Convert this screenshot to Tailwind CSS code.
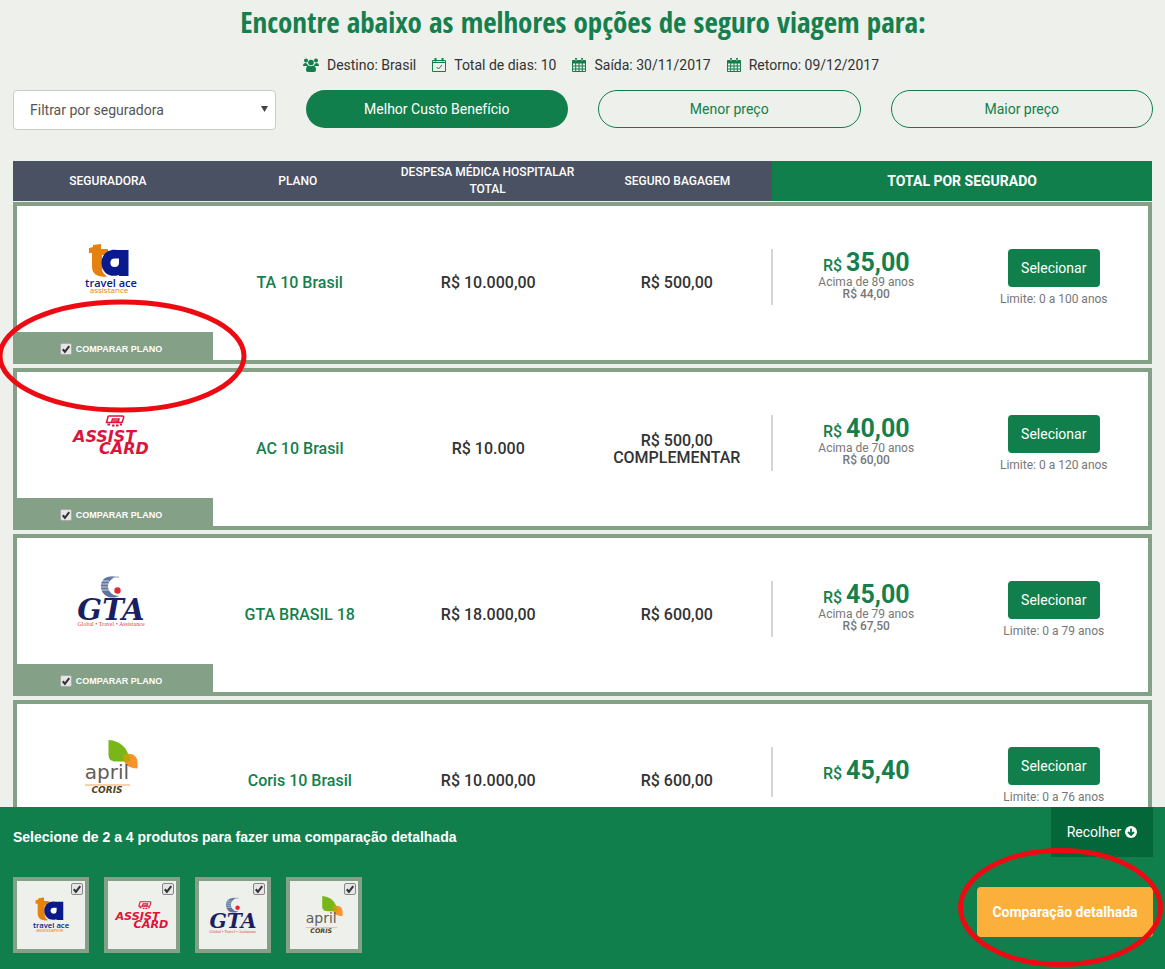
<!DOCTYPE html>
<html lang="pt-BR">
<head>
  <meta charset="UTF-8" />
  <title>Seguro viagem - Cotação</title>
  <meta name="viewport" content="width=device-width, initial-scale=1" />
  <script src="https://cdn.jsdelivr.net/npm/@tailwindcss/browser@4"></script>
</head>
<body class="relative min-h-screen overflow-x-hidden bg-[#edf0eb] font-[Roboto,sans-serif] text-sm text-[#333]">

  <!-- Shared icons and insurer logos -->
  <svg class="hidden">
    <symbol id="check" viewBox="0 0 13 13">
      <path d="M3 6.800 5.300 9.500 10 3.300" fill="none" stroke="#333" stroke-width="2.200" />
    </symbol>
    <symbol id="calendar" viewBox="0 0 14 14">
      <path d="M.5 2.500h13v11H.5zM.5 5h13M.5 8h13M.5 11h13M3.700 5v8.500M7 5v8.500M10.300 5v8.500" fill="none" stroke="#107f4c" />
      <path d="M.5 2.500h13V5H.5zM3 0h2v3.500H3zM9 0h2v3.500H9z" fill="#107f4c" />
      <path d="M4 .8v2.200M10 .8v2.200" stroke="#edf0eb" stroke-width=".7" />
    </symbol>
    <symbol id="travel-ace" viewBox="0 0 80 60">
      <path d="M18 9l4-1V6l8-1v5h7v6h-6v14c0 3 2 5 5 7.500-9 1-15-2-15-10V14h-3z" fill="#e5820f" />
      <path d="M57.500 11v26h-9l-1-1c-8 3-17-2-17-12 0-9 7-14 15-13z" fill="#0a1a8c" />
      <path d="M48 19.500v4.500a4.300 4.300 0 1 1-4.300-4.500z" fill="#fff" />
      <text x="40" y="48" text-anchor="middle" font-family="Open Sans" font-weight="600" font-size="11" fill="#0a1a8c">travel ace</text>
      <text x="38" y="54" text-anchor="middle" font-family="Open Sans" font-size="8" fill="#e5820f">assistance</text>
    </symbol>
    <symbol id="assist-card" viewBox="0 0 80 60">
      <path d="M38 11h13c2 0 2 1 1.500 2L51 17.500H35.500L37 12c0-.6.5-1 1-1z" fill="none" stroke="#dc143c" stroke-width="1.500" />
      <path d="M40.500 17.500l1-3.500h6.500l-1 3.500M42 16h5" fill="none" stroke="#dc143c" stroke-width="1.500" />
      <path d="M36.500 19.500h2.500M41 20.500h2.500M45 20.500h2.500M49 19.500h2" stroke="#dc143c" stroke-width="2" />
      <text x="2" y="37" font-family="DejaVu Sans" font-style="italic" font-weight="bold" font-size="16" fill="#dc143c">ASSIST</text>
      <text x="28" y="49" font-family="DejaVu Sans" font-style="italic" font-weight="bold" font-size="16" fill="#dc143c">CARD</text>
    </symbol>
    <symbol id="gta" viewBox="0 0 80 60">
      <path d="M44 6C34 4 29 10 30 17c1 8 10 12 18 8-6 0-11-4-11-10 0-4 3-7 7-9z" fill="#5f739f" />
      <path d="M30 10h8M29 13h8M29 16h8M30 19h9" stroke="#fff" stroke-width=".7" />
      <path d="M39 6h9" stroke="#8d9bbb" />
      <circle cx="46.500" cy="19.500" r="3.200" fill="#e02a35" />
      <text x="40" y="49" text-anchor="middle" font-family="DejaVu Serif" font-style="italic" font-weight="bold" font-size="29" fill="#1a1f63">GTA</text>
      <text x="40" y="55" text-anchor="middle" font-family="Liberation Serif" font-size="6" fill="#e0434c">Global • Travel • Assistance</text>
    </symbol>
    <symbol id="april-coris" viewBox="0 0 80 60">
      <path d="M37.500 3C49 4 57 10 59 24.500H45c-5 0-7.500-2-7.500-7z" fill="#78b61a" />
      <path d="M55 17c7-1 11 2 11.500 8v6.500C58 31 53 28 52.500 21c0-2 1-4 2.500-4z" fill="#f7922c" />
      <path d="M55 17h2.500c1 2 1.500 5 1.500 7.500h-6C52 21 53 18 55 17z" fill="#c2a400" />
      <text x="36" y="42" text-anchor="middle" font-family="DejaVu Sans" font-size="20" fill="#625d58">april</text>
      <path d="M14 48h45" stroke="#f0a55a" />
      <text x="36" y="56" text-anchor="middle" font-family="DejaVu Sans" font-style="italic" font-weight="bold" font-size="9" fill="#4a4425">CORIS</text>
    </symbol>
  </svg>

  <!-- Search summary and filters -->
  <header class="pr-3 pl-[13px]">
    <h1 class="flex h-11 items-center justify-center font-['Open_Sans_Condensed','Liberation_Sans_Narrow',sans-serif] text-[29px] font-bold whitespace-nowrap text-[#157f4d]">Encontre abaixo as melhores opções de seguro viagem para:</h1>
    <ul class="flex h-[46px] items-center justify-center gap-4 pb-1 pl-4 text-[#333]">
      <li class="flex items-center gap-2">
        <svg class="h-3.5 w-4" viewBox="0 0 16 14" fill="#107f4c">
          <circle cx="3" cy="2.500" r="2" /><circle cx="13" cy="2.500" r="2" /><circle cx="8" cy="4.500" r="2.800" />
          <path d="M0 8c0-2 1-3 2.500-3l2 1c0 1 .5 1.600 1 2H1C.4 8 0 8 0 8zM16 8c0-2-1-3-2.500-3l-2 1c0 1-.5 1.600-1 2H15c.6 0 1 0 1 0zM3 12c0-3 1-4.500 3-4.500 1.200 1 2.800 1 4 0 2 0 3 1.500 3 4.500 0 1.300-.8 2-2 2H5c-1.200 0-2-.7-2-2z" />
        </svg>
        Destino: Brasil
      </li>
      <li class="flex items-center gap-2">
        <svg class="size-3.5" viewBox="0 0 14 14" fill="none" stroke="#107f4c">
          <path d="M.5 2.500h13v11H.5zM.5 4.500h13M4.500 9l2 2 3.500-4" /><path d="M3.500 0v3.500M10.500 0v3.500" stroke-width="2" />
        </svg>
        Total de dias: 10
      </li>
      <li class="flex items-center gap-2"><svg class="size-3.5"><use href="#calendar" /></svg>Saída: 30/11/2017</li>
      <li class="flex items-center gap-2"><svg class="size-3.5"><use href="#calendar" /></svg>Retorno: 09/12/2017</li>
    </ul>
    <div class="grid grid-cols-4 gap-[30px]">
      <div class="relative">
        <select aria-label="Filtrar por seguradora" class="h-10 w-full appearance-none rounded border border-[#c5cfc2] bg-white px-4 text-[#555]">
          <option>Filtrar por seguradora</option>
        </select>
        <svg class="pointer-events-none absolute top-4 right-2 h-1.5 w-[7px]" viewBox="0 0 7 6"><path d="M0 0h7L3.500 6z" fill="#444" /></svg>
      </div>
      <button class="h-[38px] rounded-full bg-[#107f4c] text-white">Melhor Custo Benefício</button>
      <button class="h-[38px] rounded-full border border-[#107f4c] text-[#107f4c]">Menor preço</button>
      <button class="h-[38px] rounded-full border border-[#107f4c] text-[#107f4c]">Maior preço</button>
    </div>
  </header>

  <!-- Plans -->
  <main class="mt-[31px] pr-[13px] pb-24 pl-[13px]">
    <table class="block w-full text-center">
      <thead class="mb-px block">
        <tr class="grid h-10 grid-cols-6 bg-[#4a5162] text-xs text-white">
          <th class="self-center font-medium">SEGURADORA</th>
          <th class="self-center font-medium">PLANO</th>
          <th class="self-center px-1 leading-[17px] font-medium">DESPESA MÉDICA HOSPITALAR TOTAL</th>
          <th class="self-center font-medium">SEGURO BAGAGEM</th>
          <th class="col-span-2 flex items-center justify-center bg-[#107f4c] text-sm font-bold">TOTAL POR SEGURADO</th>
        </tr>
      </thead>
      <tbody class="flex flex-col gap-1">
        <tr class="grid h-[162px] grid-cols-6 border-4 border-[#84a087] bg-white">
          <td class="relative flex justify-center pt-[33px]">
            <svg class="h-[60px] w-20" role="img" aria-label="Travel Ace Assistance"><use href="#travel-ace" /></svg>
            <label class="absolute -bottom-1 -left-1 flex h-8 w-[200px] items-center justify-center gap-1 bg-[#84a087] pt-0.5 pr-1 font-['Liberation_Sans',sans-serif] text-[9px] font-bold text-white">
              <span class="grid"><input type="checkbox" checked class="col-start-1 row-start-1 size-3 appearance-none rounded-xs border border-[#aaa] bg-[#e6e6e6]" /><svg class="pointer-events-none col-start-1 row-start-1 size-3"><use href="#check" /></svg></span>
              COMPARAR PLANO
            </label>
          </td>
          <td class="self-center text-base font-medium text-[#157f4d]">TA 10 Brasil</td>
          <td class="self-center text-base font-medium">R$ 10.000,00</td>
          <td class="self-center text-base font-medium">R$ 500,00</td>
          <td class="mt-[43px] h-14 border-l-2 border-[#d5d5d5] text-xs leading-3 text-[#777]">
            <p class="-mb-1 text-base leading-7 font-medium text-[#157f4d]">R$ <b class="text-[25px]">35,00</b></p>
            <p>Acima de 89 anos</p>
            <p class="font-medium">R$ 44,00</p>
          </td>
          <td class="pt-[43px] text-xs text-[#777]">
            <button class="h-[38px] w-[92px] rounded bg-[#107f4c] text-sm text-white">Selecionar</button>
            <p class="mt-1">Limite: 0 a 100 anos</p>
          </td>
        </tr>
        <tr class="grid h-[162px] grid-cols-6 border-4 border-[#84a087] bg-white">
          <td class="relative flex justify-center pt-[33px]">
            <svg class="h-[60px] w-20" role="img" aria-label="Assist Card"><use href="#assist-card" /></svg>
            <label class="absolute -bottom-1 -left-1 flex h-8 w-[200px] items-center justify-center gap-1 bg-[#84a087] pt-0.5 pr-1 font-['Liberation_Sans',sans-serif] text-[9px] font-bold text-white">
              <span class="grid"><input type="checkbox" checked class="col-start-1 row-start-1 size-3 appearance-none rounded-xs border border-[#aaa] bg-[#e6e6e6]" /><svg class="pointer-events-none col-start-1 row-start-1 size-3"><use href="#check" /></svg></span>
              COMPARAR PLANO
            </label>
          </td>
          <td class="self-center text-base font-medium text-[#157f4d]">AC 10 Brasil</td>
          <td class="self-center text-base font-medium">R$ 10.000</td>
          <td class="self-center text-base leading-[17px] font-medium">R$ 500,00<br />COMPLEMENTAR</td>
          <td class="mt-[43px] h-14 border-l-2 border-[#d5d5d5] text-xs leading-3 text-[#777]">
            <p class="-mb-1 text-base leading-7 font-medium text-[#157f4d]">R$ <b class="text-[25px]">40,00</b></p>
            <p>Acima de 70 anos</p>
            <p class="font-medium">R$ 60,00</p>
          </td>
          <td class="pt-[43px] text-xs text-[#777]">
            <button class="h-[38px] w-[92px] rounded bg-[#107f4c] text-sm text-white">Selecionar</button>
            <p class="mt-1">Limite: 0 a 120 anos</p>
          </td>
        </tr>
        <tr class="grid h-[162px] grid-cols-6 border-4 border-[#84a087] bg-white">
          <td class="relative flex justify-center pt-[33px]">
            <svg class="h-[60px] w-20" role="img" aria-label="GTA"><use href="#gta" /></svg>
            <label class="absolute -bottom-1 -left-1 flex h-8 w-[200px] items-center justify-center gap-1 bg-[#84a087] pt-0.5 pr-1 font-['Liberation_Sans',sans-serif] text-[9px] font-bold text-white">
              <span class="grid"><input type="checkbox" checked class="col-start-1 row-start-1 size-3 appearance-none rounded-xs border border-[#aaa] bg-[#e6e6e6]" /><svg class="pointer-events-none col-start-1 row-start-1 size-3"><use href="#check" /></svg></span>
              COMPARAR PLANO
            </label>
          </td>
          <td class="self-center text-base font-medium text-[#157f4d]">GTA BRASIL 18</td>
          <td class="self-center text-base font-medium">R$ 18.000,00</td>
          <td class="self-center text-base font-medium">R$ 600,00</td>
          <td class="mt-[43px] h-14 border-l-2 border-[#d5d5d5] text-xs leading-3 text-[#777]">
            <p class="-mb-1 text-base leading-7 font-medium text-[#157f4d]">R$ <b class="text-[25px]">45,00</b></p>
            <p>Acima de 79 anos</p>
            <p class="font-medium">R$ 67,50</p>
          </td>
          <td class="pt-[43px] text-xs text-[#777]">
            <button class="h-[38px] w-[92px] rounded bg-[#107f4c] text-sm text-white">Selecionar</button>
            <p class="mt-1">Limite: 0 a 79 anos</p>
          </td>
        </tr>
        <tr class="grid h-[162px] grid-cols-6 border-4 border-[#84a087] bg-white">
          <td class="flex justify-center pt-[33px]">
            <svg class="h-[60px] w-20" role="img" aria-label="April Coris"><use href="#april-coris" /></svg>
          </td>
          <td class="self-center text-base font-medium text-[#157f4d]">Coris 10 Brasil</td>
          <td class="self-center text-base font-medium">R$ 10.000,00</td>
          <td class="self-center text-base font-medium">R$ 600,00</td>
          <td class="mt-[43px] flex h-[50px] items-center justify-center border-l-2 border-[#d5d5d5]">
            <p class="text-base leading-7 font-medium text-[#157f4d]">R$ <b class="text-[25px]">45,40</b></p>
          </td>
          <td class="pt-[43px] text-xs text-[#777]">
            <button class="h-[38px] w-[92px] rounded bg-[#107f4c] text-sm text-white">Selecionar</button>
            <p class="mt-1">Limite: 0 a 76 anos</p>
          </td>
        </tr>
      </tbody>
    </table>
  </main>

  <!-- Comparison drawer -->
  <footer class="fixed inset-x-0 bottom-0 flex h-[162px] justify-between bg-[#107f4c] pr-3 pl-[13px] text-white">
    <div class="flex flex-col justify-between pt-5 pb-4">
      <p class="font-['Liberation_Sans',sans-serif] font-bold">Selecione de 2 a 4 produtos para fazer uma comparação detalhada</p>
      <div class="flex gap-[15px]">
        <label class="relative grid size-19 place-items-center border-4 border-[#84a087] bg-[#edf0eb]">
          <svg class="h-[42px] w-14" role="img" aria-label="Travel Ace Assistance"><use href="#travel-ace" /></svg>
          <span class="absolute top-0.5 right-0.5 grid"><input type="checkbox" checked class="col-start-1 row-start-1 size-3 appearance-none rounded-xs border border-[#888] bg-[#e6e6e6]" /><svg class="pointer-events-none col-start-1 row-start-1 size-3"><use href="#check" /></svg></span>
        </label>
        <label class="relative grid size-19 place-items-center border-4 border-[#84a087] bg-[#edf0eb]">
          <svg class="h-[42px] w-14" role="img" aria-label="Assist Card"><use href="#assist-card" /></svg>
          <span class="absolute top-0.5 right-0.5 grid"><input type="checkbox" checked class="col-start-1 row-start-1 size-3 appearance-none rounded-xs border border-[#888] bg-[#e6e6e6]" /><svg class="pointer-events-none col-start-1 row-start-1 size-3"><use href="#check" /></svg></span>
        </label>
        <label class="relative grid size-19 place-items-center border-4 border-[#84a087] bg-[#edf0eb]">
          <svg class="h-[42px] w-14" role="img" aria-label="GTA"><use href="#gta" /></svg>
          <span class="absolute top-0.5 right-0.5 grid"><input type="checkbox" checked class="col-start-1 row-start-1 size-3 appearance-none rounded-xs border border-[#888] bg-[#e6e6e6]" /><svg class="pointer-events-none col-start-1 row-start-1 size-3"><use href="#check" /></svg></span>
        </label>
        <label class="relative grid size-19 place-items-center border-4 border-[#84a087] bg-[#edf0eb]">
          <svg class="h-[42px] w-14" role="img" aria-label="April Coris"><use href="#april-coris" /></svg>
          <span class="absolute top-0.5 right-0.5 grid"><input type="checkbox" checked class="col-start-1 row-start-1 size-3 appearance-none rounded-xs border border-[#888] bg-[#e6e6e6]" /><svg class="pointer-events-none col-start-1 row-start-1 size-3"><use href="#check" /></svg></span>
        </label>
      </div>
    </div>
    <div class="flex flex-col items-end justify-between pb-8">
      <button class="flex h-[50px] w-[102px] items-center justify-center gap-1 bg-[#04673a]">
        Recolher
        <svg class="size-3" viewBox="0 0 12 12"><circle cx="6" cy="6" r="6" fill="#fff" /><path d="M6 2.500v6M3 6l3 3 3-3" fill="none" stroke="#04673a" stroke-width="1.800" /></svg>
      </button>
      <button class="h-[50px] w-44 rounded bg-[#fbb03b] font-bold">Comparação detalhada</button>
    </div>
    <svg class="pointer-events-none absolute right-0 bottom-0 h-[122px] w-[209px]" viewBox="0 0 209 122"><ellipse cx="104.500" cy="60.500" rx="100" ry="57" fill="none" stroke="#ee0a12" stroke-width="5" /></svg>
  </footer>

  <!-- Highlight over the compare option -->
  <svg class="pointer-events-none absolute top-[297px] left-0 h-[118px] w-[250px]" viewBox="0 0 250 118"><ellipse cx="122" cy="59" rx="122" ry="54" fill="none" stroke="#ee0a12" stroke-width="5" /></svg>
</body>
</html>
